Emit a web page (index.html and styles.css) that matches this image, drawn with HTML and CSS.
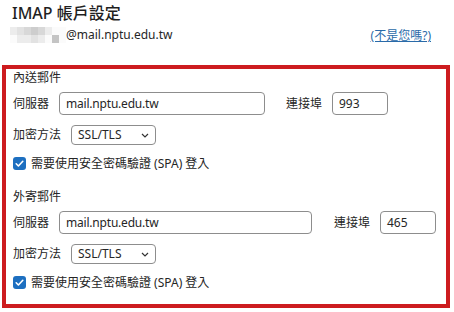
FILE: index.html
```html
<!DOCTYPE html>
<html lang="zh-Hant">
<head>
<meta charset="utf-8">
<link rel="stylesheet" href="styles.css">
</head>
<body>
<div class="page">
  <header class="head">
    <h1 class="title">IMAP 帳戶設定</h1>
    <div class="account">
      <div class="mosaic">
        <span class="c1"></span><span class="c2"></span><span class="c3"></span><span class="c4"></span><span class="c3"></span><span class="c1"></span><span class="c0"></span><span class="c0"></span>
        <span class="c0"></span><span class="c1"></span><span class="c1"></span><span class="c2"></span><span class="c1"></span><span class="c0"></span><span class="c5"></span><span class="c0"></span>
      </div>
      <span class="addr">@mail.nptu.edu.tw</span>
      <a class="notyou" href="#">(不是您嗎?)</a>
    </div>
  </header>
  <section class="box">
    <div class="group">
      <div class="glabel">內送郵件</div>
      <div class="row">
        <span class="lbl lbl-server">伺服器</span>
        <span class="field server1">mail.nptu.edu.tw</span>
        <span class="lbl lbl-port gap1">連接埠</span>
        <span class="field port">993</span>
      </div>
      <div class="row sel-row">
        <span class="lbl lbl-enc">加密方法</span>
        <span class="select">SSL/TLS<svg class="chev" viewBox="0 0 8 5" width="8" height="5"><path d="M1 1 L4 4 L7 1" fill="none" stroke="#333" stroke-width="1.2"/></svg></span>
      </div>
      <div class="row chk-row">
        <span class="chk"><svg viewBox="0 0 13 13" width="13" height="13"><path d="M3.2 6.8 L5.4 9 L9.8 4.3" fill="none" stroke="#fff" stroke-width="1.6" stroke-linecap="round" stroke-linejoin="round"/></svg></span>
        <span class="chk-text">需要使用安全密碼驗證 (SPA) 登入</span>
      </div>
    </div>
    <div class="group group2">
      <div class="glabel">外寄郵件</div>
      <div class="row">
        <span class="lbl lbl-server">伺服器</span>
        <span class="field server2">mail.nptu.edu.tw</span>
        <span class="lbl lbl-port gap2">連接埠</span>
        <span class="field port">465</span>
      </div>
      <div class="row sel-row">
        <span class="lbl lbl-enc">加密方法</span>
        <span class="select">SSL/TLS<svg class="chev" viewBox="0 0 8 5" width="8" height="5"><path d="M1 1 L4 4 L7 1" fill="none" stroke="#333" stroke-width="1.2"/></svg></span>
      </div>
      <div class="row chk-row">
        <span class="chk"><svg viewBox="0 0 13 13" width="13" height="13"><path d="M3.2 6.8 L5.4 9 L9.8 4.3" fill="none" stroke="#fff" stroke-width="1.6" stroke-linecap="round" stroke-linejoin="round"/></svg></span>
        <span class="chk-text">需要使用安全密碼驗證 (SPA) 登入</span>
      </div>
    </div>
  </section>
</div>
</body>
</html>
```
FILE: styles.css
```css
* { box-sizing: border-box; }
html, body { margin: 0; padding: 0; background: #fff; }
body {
  font-family: "Noto Sans", "Noto Sans CJK TC", sans-serif;
  color: #262626;
  width: 454px;
  height: 312px;
  overflow: hidden;
}
.page { padding-top: 3px; }
.head { padding: 0 23px 0 12px; }
.title {
  margin: 0;
  font-size: 16px;
  font-weight: 500;
  line-height: 20px;
  height: 20px;
  color: #1f1f1f;
}
.account {
  display: flex;
  align-items: center;
  height: 18px;
  margin-top: 3px;
}
.mosaic {
  display: grid;
  grid-template-columns: repeat(8, 7px);
  grid-template-rows: 8px 8px;
  margin-left: -2px;
}
.mosaic span { display: block; }
.c0 { background: #fbfbfb; }
.c1 { background: #ececec; }
.c2 { background: #e2e2e2; }
.c3 { background: #d8d8d8; }
.c4 { background: #cdcdcd; }
.c5 { background: #c4c4c4; }
.addr { font-size: 12px; line-height: 18px; }
.notyou {
  margin-left: auto;
  font-size: 12px;
  color: #2a6aa8;
  text-decoration: underline;
}
.box {
  margin: 21px 0 0 2px;
  width: 448px;
  height: 243px;
  border: 4px solid #cd1c1f;
  padding: 1px 0 0 7px;
}
.group2 { margin-top: 19px; }
.glabel { font-size: 12px; line-height: 16px; height: 16px; }
.row { display: flex; align-items: center; }
.group .row:nth-child(2) { margin-top: 6px; height: 23px; }
.lbl { font-size: 12px; line-height: 16px; }
.lbl-server { width: 46px; }
.lbl-enc { width: 58px; }
.lbl-port { width: 46px; }
.gap1 { margin-left: 21px; }
.gap2 { margin-left: 22px; }
.field {
  height: 23px;
  border: 1px solid #8d8d8d;
  border-radius: 4px;
  font-size: 12px;
  line-height: 21px;
  padding-left: 6px;
  background: #fff;
}
.server1, .server2 { letter-spacing: -0.2px; }
.server1 { width: 206px; }
.server2 { width: 253px; }
.port { width: 56px; }
.sel-row { margin-top: 10px; height: 20px; }
.select {
  width: 85px;
  height: 20px;
  border: 1px solid #8d8d8d;
  border-radius: 4px;
  font-size: 12px;
  line-height: 18px;
  padding: 0 6px;
  display: flex;
  align-items: center;
  justify-content: space-between;
}
.chev { display: block; }
.chk-row { margin-top: 12px; height: 13px; }
.chk {
  width: 13px;
  height: 13px;
  background: #1d6fc0;
  border-radius: 3px;
  display: block;
  margin-right: 5px;
}
.chk svg { display: block; }
.chk-text { font-size: 12px; line-height: 16px; }
```
